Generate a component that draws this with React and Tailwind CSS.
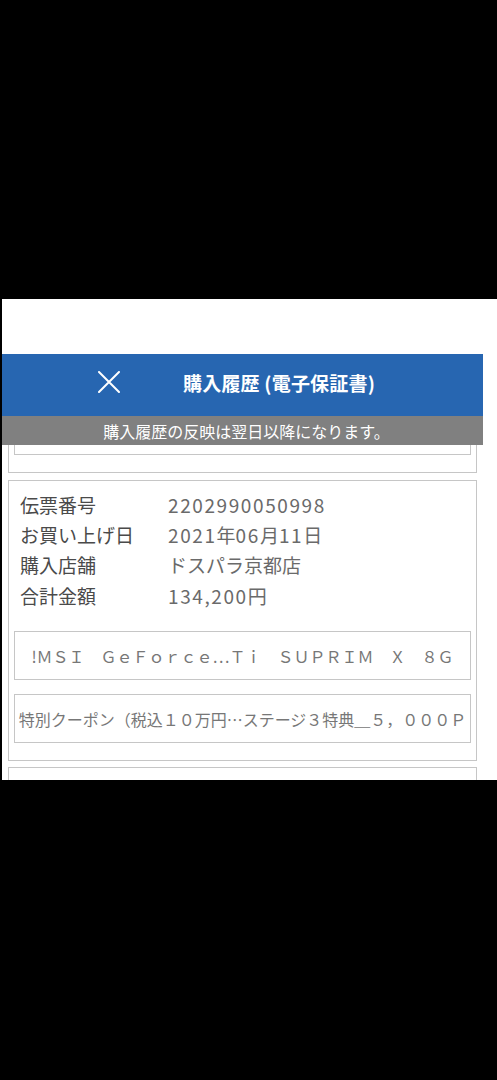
const rows = [
  ["伝票番号", "2202990050998"],
  ["お買い上げ日", "2021年06月11日"],
  ["購入店舗", "ドスパラ京都店"],
  ["合計金額", "134,200円"],
];

// digits in the reference are wider than Noto's, so space them out a bit
function Value({ text }) {
  const parts = text.split(/([\d,]+)/);
  return (
    <span>
      {parts.map((p, i) =>
        /[\d,]/.test(p) ? (
          <span key={i} className="tracking-[1.6px]">
            {p}
          </span>
        ) : (
          <span key={i}>{p}</span>
        )
      )}
    </span>
  );
}

function CloseIcon() {
  return (
    <svg width="22" height="22" viewBox="0 0 22 22" fill="none">
      <path d="M1 1 L21 21 M21 1 L1 21" stroke="#ffffff" strokeWidth="2" strokeLinecap="round" />
    </svg>
  );
}

export default function App() {
  return (
    <div className="w-[497px] h-[1080px] bg-black flex flex-col font-['Noto_Sans_CJK_JP',sans-serif]">
      <div className="h-[299px] shrink-0" />
      <div className="ml-[2px] h-[481px] bg-white overflow-hidden flex flex-col shrink-0">
        <div className="h-[55px] shrink-0" />

        {/* header */}
        <div className="w-[481px] h-[62px] shrink-0 bg-[#2766b1] flex items-center pl-[96px] pb-[6px]">
          <CloseIcon />
          <span className="ml-[63px] text-white text-[19px] font-bold leading-none tracking-[0.2px]">
            購入履歴 (電子保証書)
          </span>
        </div>
        <div className="w-[481px] h-[29px] shrink-0 bg-[#808080] flex items-center justify-center pl-[8px]">
          <span className="text-white text-[16px] leading-none">購入履歴の反映は翌日以降になります。</span>
        </div>

        {/* previous card, scrolled under the header */}
        <div className="ml-[6px] w-[469px] shrink-0 border-x border-b border-[#c6c6c6] px-[5px] pb-[17px]">
          <div className="h-[10px] border-x border-b border-[#c6c6c6]" />
        </div>

        {/* current card */}
        <div className="ml-[6px] mt-[7px] w-[469px] shrink-0 border border-[#c6c6c6] px-[5px] pt-[8px] pb-[17px]">
          <div className="flex flex-col">
            {rows.map(([label, value]) => (
              <div key={label} className="flex h-[30.3px] items-center text-[19px] leading-none">
                <span className="w-[154px] pl-[6px] text-[#4a4a4a]">{label}</span>
                <span className="text-[#6a6a6a]">
                  <Value text={value} />
                </span>
              </div>
            ))}
          </div>
          <div className="mt-[21px] h-[49px] border border-[#c6c6c6] flex items-center justify-center overflow-hidden whitespace-nowrap">
            <span className="text-[16px] leading-none text-[#777777]">
              !ＭＳＩ　ＧｅＦｏｒｃｅ⋯Ｔｉ　ＳＵＰＲＩＭ　Ｘ　８Ｇ
            </span>
          </div>
          <div className="mt-[14px] h-[49px] border border-[#c6c6c6] flex items-center justify-center overflow-hidden whitespace-nowrap">
            <span className="text-[16px] leading-none text-[#777777]">
              特別クーポン（税込１０万円…ステージ３特典＿５，０００Ｐ
            </span>
          </div>
        </div>

        {/* next card, cut off */}
        <div className="ml-[6px] mt-[6px] w-[469px] h-[40px] shrink-0 border border-[#c6c6c6]" />
      </div>
    </div>
  );
}
